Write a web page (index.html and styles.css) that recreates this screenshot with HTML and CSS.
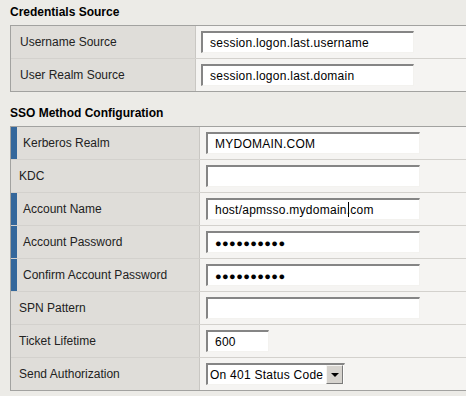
FILE: index.html
```html
<!DOCTYPE html>
<html>
  <head>
    <title>SSO Configuration</title>
    <link rel="stylesheet" href="styles.css">
  </head>
  <body>
    <div class="section">
      <h3 class="section-title">Credentials Source</h3>
      <div class="props props-narrow">
        <div class="row">
          <div class="label">Username Source</div>
          <div class="value">
            <input class="field" type="text" value="session.logon.last.username" />
          </div>
        </div>
        <div class="row">
          <div class="label">User Realm Source</div>
          <div class="value">
            <input class="field" type="text" value="session.logon.last.domain" />
          </div>
        </div>
      </div>
    </div>

    <div class="section">
      <h3 class="section-title">SSO Method Configuration</h3>
      <div class="props props-wide">
        <div class="row">
          <div class="label required">Kerberos Realm</div>
          <div class="value">
            <input class="field" type="text" value="MYDOMAIN.COM" />
          </div>
        </div>
        <div class="row">
          <div class="label">KDC</div>
          <div class="value">
            <input class="field" type="text" value="" />
          </div>
        </div>
        <div class="row">
          <div class="label required">Account Name</div>
          <div class="value">
            <div class="field-wrap">
              <input class="field" type="text" value="host/apmsso.mydomain.com" />
              <span class="caret"></span>
            </div>
          </div>
        </div>
        <div class="row">
          <div class="label required">Account Password</div>
          <div class="value">
            <input class="field secret" type="text" value="●●●●●●●●●●" />
          </div>
        </div>
        <div class="row">
          <div class="label required">Confirm Account Password</div>
          <div class="value">
            <input class="field secret" type="text" value="●●●●●●●●●●" />
          </div>
        </div>
        <div class="row">
          <div class="label">SPN Pattern</div>
          <div class="value">
            <input class="field" type="text" value="" />
          </div>
        </div>
        <div class="row">
          <div class="label">Ticket Lifetime</div>
          <div class="value">
            <input class="field field-short" type="text" value="600" />
          </div>
        </div>
        <div class="row">
          <div class="label">Send Authorization</div>
          <div class="value">
            <div class="dropdown">
              <span class="dropdown-text">On 401 Status Code</span>
              <span class="dropdown-btn"><span class="arrow"></span></span>
            </div>
          </div>
        </div>
      </div>
    </div>
  </body>
</html>
```

FILE: styles.css
```css
html,
body {
  margin: 0;
  padding: 0;
  overflow: hidden;
}

body {
  font-family: "Liberation Sans", Arial, sans-serif;
  font-size: 12px;
  color: #111;
  background-color: #ecebe7;
  width: 466px;
  height: 396px;
}

.section {
  margin-bottom: 9px;
}

.section-title {
  margin: 0 0 5px 10px;
  padding-top: 4px;
  font-size: 12px;
  line-height: 16px;
  font-weight: bold;
  color: #000;
}

.props {
  margin-left: 10px;
  width: 480px;
  border: 1px solid #a2a2a0;
}

.row {
  display: grid;
  height: 32px;
  border-bottom: 1px solid #d3d1cd;
}

.row:last-child {
  border-bottom: none;
}

.props-narrow .row {
  grid-template-columns: 185px 1fr;
}

.props-wide .row {
  grid-template-columns: 189px 1fr;
}

.label {
  display: flex;
  align-items: center;
  background-color: #dfddd9;
  border-right: 1px solid #c9c7c3;
  color: #222;
}

.props-narrow .label {
  padding-left: 9px;
}

.props-wide .label {
  padding-left: 8px;
}

.props-wide .label.required {
  border-left: 6px solid #34679b;
  padding-left: 6px;
}

.value {
  display: flex;
  align-items: center;
  background-color: #f5f4f2;
  padding-left: 5px;
}

.props-wide .value {
  padding-left: 6px;
}

.field {
  box-sizing: border-box;
  width: 213px;
  height: 22px;
  margin: 0;
  padding: 1px 0 0 7px;
  font-family: "Liberation Sans", Arial, sans-serif;
  font-size: 12px;
  letter-spacing: 0.25px;
  color: #000;
  background-color: #fff;
  border-top: 2px solid #858585;
  border-left: 2px solid #858585;
  border-right: 1px solid #f3f2ef;
  border-bottom: 1px solid #f3f2ef;
  outline: none;
}

.props-wide .field {
  width: 214px;
}

.field.secret {
  font-size: 11px;
  letter-spacing: 0.4px;
}

.props-wide .field-short {
  width: 63px;
}

.field-wrap {
  position: relative;
  display: flex;
}

.caret {
  position: absolute;
  left: 142px;
  top: 4px;
  width: 1px;
  height: 15px;
  background-color: #000;
}

.dropdown {
  box-sizing: border-box;
  display: flex;
  align-items: center;
  width: 139px;
  height: 22px;
  background-color: #fff;
  border-top: 2px solid #858585;
  border-left: 2px solid #858585;
  border-right: 1px solid #f3f2ef;
  border-bottom: 1px solid #f3f2ef;
}

.dropdown-text {
  flex: 1;
  padding-left: 2px;
  letter-spacing: 0.25px;
  color: #000;
}

.dropdown-btn {
  display: flex;
  align-items: center;
  justify-content: center;
  width: 15px;
  height: 17px;
  margin-right: 1px;
  background-color: #d6d3ce;
  border: 1px solid;
  border-color: #f6f5f3 #7a7a7a #7a7a7a #f6f5f3;
}

.arrow {
  width: 0;
  height: 0;
  border-left: 4px solid transparent;
  border-right: 4px solid transparent;
  border-top: 4px solid #000;
}
```
